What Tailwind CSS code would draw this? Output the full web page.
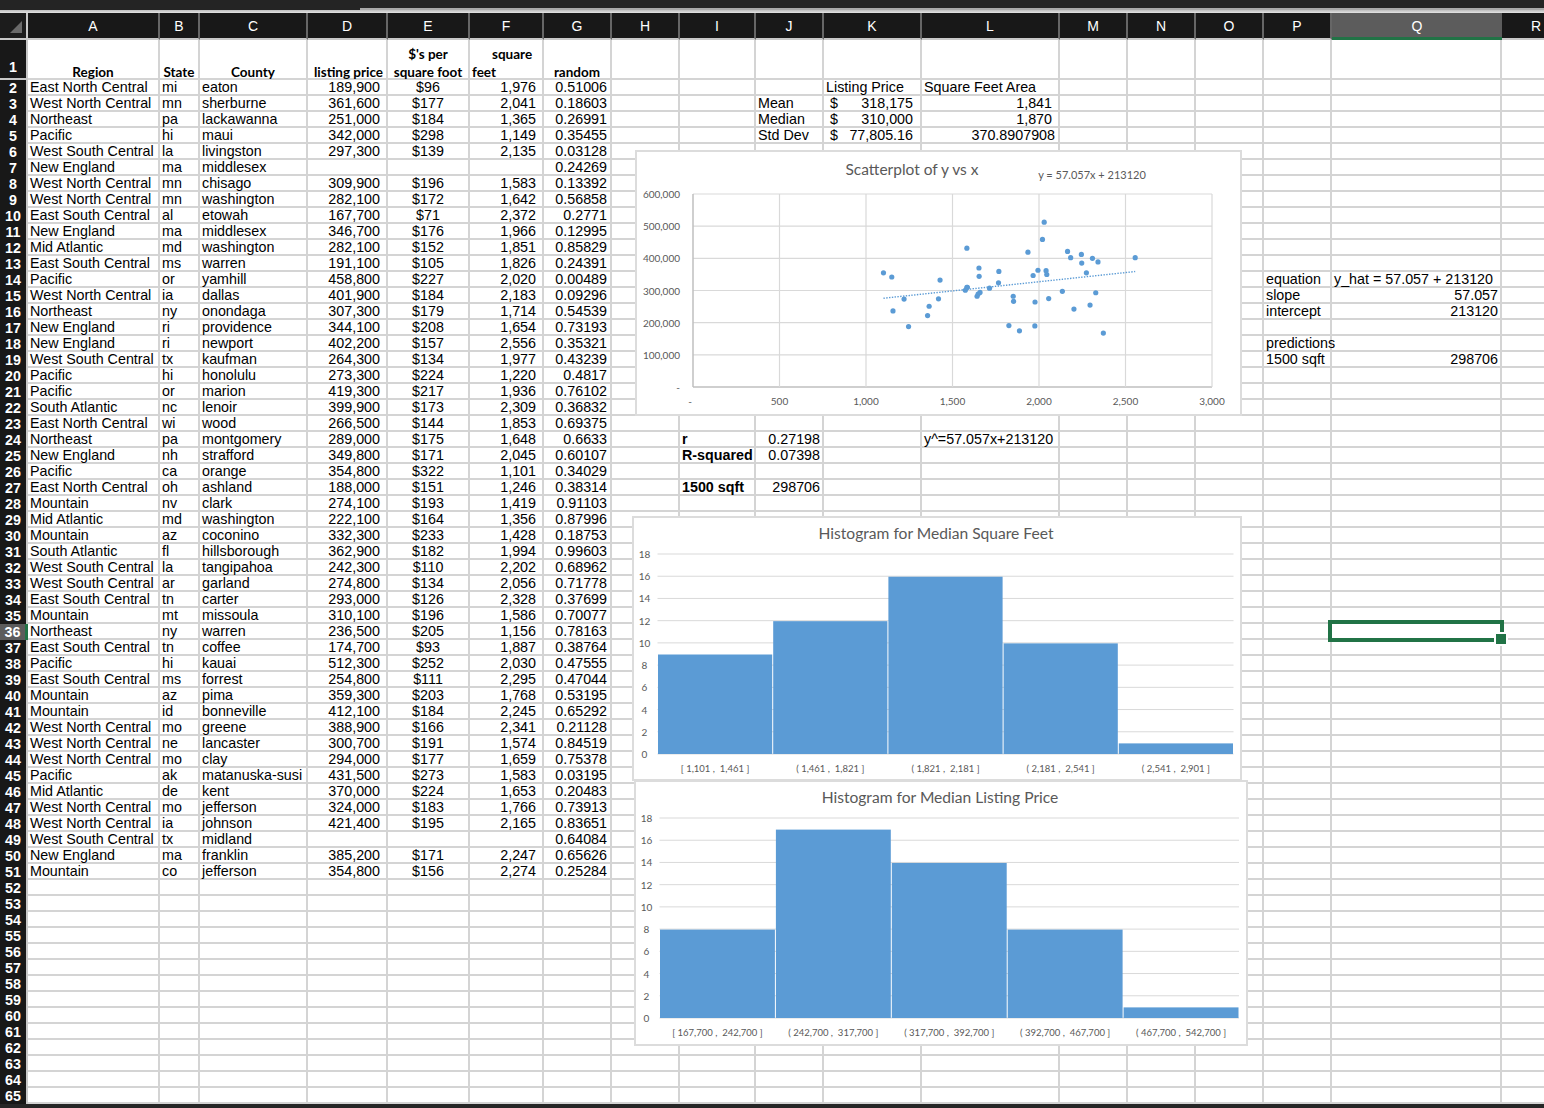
<!DOCTYPE html>
<html lang="en">
<head>
  <meta charset="UTF-8" />
  <title>Housing data sheet</title>
  <script src="https://cdn.jsdelivr.net/npm/@tailwindcss/browser@4"></script>
</head>
<body class="bg-white overflow-hidden">
  <div class="relative w-[1544px] h-[1108px] overflow-hidden bg-white font-['Liberation_Sans',Arial,sans-serif] text-[14.3px] text-black">

    <!-- window chrome above the sheet -->
    <div class="h-[8px] bg-[#242424]"></div>
    <div class="flex h-[2px]">
      <div class="w-[360px] bg-[#242424]"></div>
      <div class="flex-1 bg-[#a8a8a8]"></div>
    </div>
    <div class="h-[3px] bg-gradient-to-b from-[#bdbdbd] to-[#e4e4e4]"></div>

    <!-- column letters -->
    <div id="colHead" class="grid h-[27px] grid-cols-[28px_132px_40px_108px_80px_82px_74px_68px_68px_76px_68px_98px_138px_68px_68px_68px_68px_170px_70px] bg-[#181818] text-white text-[14px]"></div>

    <!-- rows -->
    <div id="rows"></div>

    <div class="absolute left-0 right-0 bottom-0 h-[4px] bg-[#262626]"></div>

    <!-- selected cell -->
    <div class="absolute left-[1328px] top-[620px] w-[176px] h-[22px] border-[4px] border-[#217346]"></div>
    <div class="absolute left-[1494px] top-[632px] w-[14px] h-[14px] bg-[#217346] border-2 border-white"></div>

    <!-- scatter chart -->
    <div class="absolute left-[635px] top-[150px] w-[607px] h-[266px] bg-white border-2 border-[#dcdcdc]">
      <svg id="scatter" width="603" height="262" class="block font-['Lato',sans-serif]"></svg>
    </div>

    <!-- histograms -->
    <div class="absolute left-[632px] top-[516px] w-[610px] h-[265px] bg-white border-2 border-[#dcdcdc]">
      <svg id="histA" width="606" height="261" class="block font-['Lato',sans-serif]"></svg>
    </div>
    <div class="absolute left-[634px] top-[780px] w-[614px] h-[266px] bg-white border-2 border-[#dcdcdc]">
      <svg id="histB" width="610" height="262" class="block font-['Lato',sans-serif]"></svg>
    </div>
  </div>

  <script>
    const ENC = 'East North Central', WNC = 'West North Central', ESC = 'East South Central', WSC = 'West South Central';
    const NE = 'New England', NO = 'Northeast', PA = 'Pacific', MT = 'Mountain', MA = 'Mid Atlantic', SA = 'South Atlantic';

    const data = [
      [ENC,'mi','eaton','189,900','$96','1,976','0.51006'],
      [WNC,'mn','sherburne','361,600','$177','2,041','0.18603'],
      [NO,'pa','lackawanna','251,000','$184','1,365','0.26991'],
      [PA,'hi','maui','342,000','$298','1,149','0.35455'],
      [WSC,'la','livingston','297,300','$139','2,135','0.03128'],
      [NE,'ma','middlesex','','','','0.24269'],
      [WNC,'mn','chisago','309,900','$196','1,583','0.13392'],
      [WNC,'mn','washington','282,100','$172','1,642','0.56858'],
      [ESC,'al','etowah','167,700','$71','2,372','0.2771'],
      [NE,'ma','middlesex','346,700','$176','1,966','0.12995'],
      [MA,'md','washington','282,100','$152','1,851','0.85829'],
      [ESC,'ms','warren','191,100','$105','1,826','0.24391'],
      [PA,'or','yamhill','458,800','$227','2,020','0.00489'],
      [WNC,'ia','dallas','401,900','$184','2,183','0.09296'],
      [NO,'ny','onondaga','307,300','$179','1,714','0.54539'],
      [NE,'ri','providence','344,100','$208','1,654','0.73193'],
      [NE,'ri','newport','402,200','$157','2,556','0.35321'],
      [WSC,'tx','kaufman','264,300','$134','1,977','0.43239'],
      [PA,'hi','honolulu','273,300','$224','1,220','0.4817'],
      [PA,'or','marion','419,300','$217','1,936','0.76102'],
      [SA,'nc','lenoir','399,900','$173','2,309','0.36832'],
      [ENC,'wi','wood','266,500','$144','1,853','0.69375'],
      [NO,'pa','montgomery','289,000','$175','1,648','0.6633'],
      [NE,'nh','strafford','349,800','$171','2,045','0.60107'],
      [PA,'ca','orange','354,800','$322','1,101','0.34029'],
      [ENC,'oh','ashland','188,000','$151','1,246','0.38314'],
      [MT,'nv','clark','274,100','$193','1,419','0.91103'],
      [MA,'md','washington','222,100','$164','1,356','0.87996'],
      [MT,'az','coconino','332,300','$233','1,428','0.18753'],
      [SA,'fl','hillsborough','362,900','$182','1,994','0.99603'],
      [WSC,'la','tangipahoa','242,300','$110','2,202','0.68962'],
      [WSC,'ar','garland','274,800','$134','2,056','0.71778'],
      [ESC,'tn','carter','293,000','$126','2,328','0.37699'],
      [MT,'mt','missoula','310,100','$196','1,586','0.70077'],
      [NO,'ny','warren','236,500','$205','1,156','0.78163'],
      [ESC,'tn','coffee','174,700','$93','1,887','0.38764'],
      [PA,'hi','kauai','512,300','$252','2,030','0.47555'],
      [ESC,'ms','forrest','254,800','$111','2,295','0.47044'],
      [MT,'az','pima','359,300','$203','1,768','0.53195'],
      [MT,'id','bonneville','412,100','$184','2,245','0.65292'],
      [WNC,'mo','greene','388,900','$166','2,341','0.21128'],
      [WNC,'ne','lancaster','300,700','$191','1,574','0.84519'],
      [WNC,'mo','clay','294,000','$177','1,659','0.75378'],
      [PA,'ak','matanuska-susi','431,500','$273','1,583','0.03195'],
      [MA,'de','kent','370,000','$224','1,653','0.20483'],
      [WNC,'mo','jefferson','324,000','$183','1,766','0.73913'],
      [WNC,'ia','johnson','421,400','$195','2,165','0.83651'],
      [WSC,'tx','midland','','','','0.64084'],
      [NE,'ma','franklin','385,200','$171','2,247','0.65626'],
      [MT,'co','jefferson','354,800','$156','2,274','0.25284'],
    ];

    const gridCols = 'grid grid-cols-[28px_132px_40px_108px_80px_82px_74px_68px_68px_76px_68px_98px_138px_68px_68px_68px_68px_170px_70px]';
    const letters = 'ABCDEFGHIJKLMNOPQR'.split('');

    // column headers
    const colHead = document.getElementById('colHead');
    colHead.innerHTML = '<div class="relative border-r-2 border-b-2 border-r-[#c8c8c8] border-b-[#c8c8c8] bg-[#1c1c1c]"><div class="absolute left-[10px] top-[8px] w-0 h-0 border-l-[12px] border-l-transparent border-b-[12px] border-b-[#6a6a6a]"></div></div>' +
      letters.map(l => l === 'Q'
        ? '<div class="flex items-center justify-center pt-[2px] bg-[#5c5c5c] border-b-[3px] border-[#217346]">Q</div>'
        : '<div class="flex items-center justify-center pt-[2px] border-r-2 border-b-2 border-r-[#666666] border-b-[#c8c8c8]">' + l + '</div>').join('');

    // cells outside the main table: row -> column index -> [text, kind]
    const extras = {
      2: { 10: ['Listing Price'], 11: ['Square Feet Area'] },
      3: { 9: ['Mean'], 10: ['$|318,175', 'acct'], 11: ['1,841', 'r6'] },
      4: { 9: ['Median'], 10: ['$|310,000', 'acct'], 11: ['1,870', 'r6'] },
      5: { 9: ['Std Dev'], 10: ['$|77,805.16', 'acct'], 11: ['370.8907908', 'r'] },
      14: { 15: ['equation'], 16: ['y_hat = 57.057 + 213120'] },
      15: { 15: ['slope'], 16: ['57.057', 'r2'] },
      16: { 15: ['intercept'], 16: ['213120', 'r2'] },
      18: { 15: ['predictions'] },
      19: { 15: ['1500 sqft'], 16: ['298706', 'r2'] },
      24: { 8: ['r', 'b'], 9: ['0.27198', 'r2'], 11: ['y^=57.057x+213120'] },
      25: { 8: ['R-squared', 'b'], 9: ['0.07398', 'r2'] },
      27: { 8: ['1500 sqft', 'b'], 9: ['298706', 'r2'] },
    };

    const cellBase = 'border-r-2 border-b-2 border-[#d4d4d4] whitespace-nowrap leading-[14px] ';
    function cell(text, kind) {
      if (kind === 'acct') {
        const [sym, num] = text.split('|');
        return '<div class="' + cellBase + 'flex justify-between pl-[6px] pr-[7px]"><span>' + sym + '</span><span>' + num + '</span></div>';
      }
      if (kind === 'r') return '<div class="' + cellBase + 'text-right pr-[3px]">' + text + '</div>';
      if (kind === 'r2') return '<div class="' + cellBase + 'text-right pr-[2px]">' + text + '</div>';
      if (kind === 'r6') return '<div class="' + cellBase + 'text-right pr-[6px]">' + text + '</div>';
      if (kind === 'c') return '<div class="' + cellBase + 'text-center">' + text + '</div>';
      if (kind === 'b') return '<div class="' + cellBase + 'pl-[2px] font-bold">' + text + '</div>';
      return '<div class="' + cellBase + 'pl-[2px]">' + text + '</div>';
    }

    const headCell = 'border-r-2 border-b-2 border-[#d4d4d4] font-[\'Lato\',sans-serif] font-bold text-[13.5px] leading-[18px] flex items-end justify-center whitespace-nowrap';
    const header = ['Region', 'State', 'County', '<span class="pl-[3px]">listing price</span>', "$'s per<br>square foot", '<span class="block text-left pl-[2px]"><span class="pl-[20px]">square</span><br>feet</span>', 'random'];

    let html = '<div class="' + gridCols + ' h-[40px]">' +
      '<div class="flex items-end justify-center bg-[#181818] text-white font-bold border-r-2 border-b-2 border-[#c8c8c8]">1</div>' +
      header.map(h => '<div class="' + headCell + ' text-center">' + '<div class="w-full mb-[-3px]">' + h + '</div></div>').join('') +
      Array.from({ length: 11 }, () => '<div class="border-r-2 border-b-2 border-[#d4d4d4]"></div>').join('') +
      '</div>';

    for (let n = 2; n <= 65; n++) {
      const d = data[n - 2] || [];
      const cells = [];
      for (let c = 0; c < 18; c++) {
        const extra = (extras[n] || {})[c];
        if (extra) cells.push(cell(extra[0], extra[1]));
        else if (c < 7 && d[c]) cells.push(cell(d[c], c === 4 ? 'c' : c === 6 ? 'r' : c >= 3 ? 'r6' : ''));
        else cells.push('<div class="border-r-2 border-b-2 border-[#d4d4d4]"></div>');
      }
      const rowHead = n === 36
        ? '<div class="flex items-center justify-center bg-[#5c5c5c] border-r-[3px] border-[#217346] text-white font-bold leading-[14px]">36</div>'
        : '<div class="flex items-center justify-center bg-[#181818] border-r-2 border-[#c8c8c8] text-white font-bold leading-[14px]">' + n + '</div>';
      html += '<div class="' + gridCols + ' h-[16px]">' + rowHead + cells.join('') + '</div>';
    }
    document.getElementById('rows').innerHTML = html;

    // charts
    const BLUE = '#5b9bd5', GRID = '#d9d9d9', LABEL = '#595959';
    const txt = (x, y, s, size, anchor) => `<text x="${x}" y="${y}" font-size="${size}" fill="${LABEL}" text-anchor="${anchor || 'middle'}" dominant-baseline="central">${s}</text>`;
    const line = (x1, y1, x2, y2, c, w) => `<line x1="${x1}" y1="${y1}" x2="${x2}" y2="${y2}" stroke="${c || GRID}" stroke-width="${w || 1}"/>`;

    function drawScatter() {
      // chart origin in page coordinates is 637,152
      const L = 56, R = 575, T = 42, B = 235;
      const px = v => L + v / 3000 * (R - L);
      const py = v => B - v / 600000 * (B - T);
      let s = txt(275, 17, 'Scatterplot of y vs x', 15.5) + txt(455, 22.5, 'y = 57.057x + 213120', 11);
      for (let v = 0; v <= 600000; v += 100000) {
        s += line(L, py(v), R, py(v), v ? GRID : '#bfbfbf', v ? 1.2 : 1.5);
        s += txt(L - 13, py(v), v ? v.toLocaleString('en-US') : '-', 10, 'end');
      }
      for (let v = 0; v <= 3000; v += 500) {
        s += line(px(v), T, px(v), B, v ? GRID : '#bfbfbf', v ? 1.2 : 1.5);
        s += txt(v ? px(v) : px(v) - 3, 248.5, v ? v.toLocaleString('en-US') : '-', 10);
      }
      data.forEach(d => {
        if (!d[3]) return;
        const y = +d[3].replace(/,/g, ''), x = +d[5].replace(/,/g, '');
        s += `<circle cx="${px(x)}" cy="${py(y)}" r="2.6" fill="${BLUE}"/>`;
      });
      s += `<line x1="${px(1101)}" y1="${py(57.057 * 1101 + 213120)}" x2="${px(2556)}" y2="${py(57.057 * 2556 + 213120)}" stroke="${BLUE}" stroke-width="1.4" stroke-dasharray="1.4 1.4"/>`;
      document.getElementById('scatter').innerHTML = s;
    }

    function drawHist(id, title, titleX, values, labels, L, R, T, B) {
      const step = (B - T) / 18, w = (R - L) / values.length;
      let s = txt(titleX, T - 21, title, 15.6);
      for (let v = 0; v <= 18; v += 2) {
        s += line(L, B - v * step, R, B - v * step);
        s += txt(L - 13, B - v * step, v, 10);
      }
      values.forEach((v, i) => {
        s += `<rect x="${L + i * w + 0.5}" y="${B - v * step + 0.5}" width="${w - 1}" height="${v * step - 0.5}" fill="${BLUE}"/>`;
        s += txt(L + (i + 0.5) * w, B + 14, labels[i], 9.5);
      });
      document.getElementById(id).innerHTML = s;
    }

    drawScatter();
    drawHist('histA', 'Histogram for Median Square Feet', 302, [9, 12, 16, 10, 1],
      ['[ 1,101 ,\u00a0 1,461 ]', '( 1,461 ,\u00a0 1,821 ]', '( 1,821 ,\u00a0 2,181 ]', '( 2,181 ,\u00a0 2,541 ]', '( 2,541 ,\u00a0 2,901 ]'], 23.5, 599.5, 36, 236);
    drawHist('histB', 'Histogram for Median Listing Price', 304, [8, 17, 14, 8, 1],
      ['[ 167,700 ,\u00a0 242,700 ]', '( 242,700 ,\u00a0 317,700 ]', '( 317,700 ,\u00a0 392,700 ]', '( 392,700 ,\u00a0 467,700 ]', '( 467,700 ,\u00a0 542,700 ]'], 23.5, 603, 36, 236);
  </script>
</body>
</html>
